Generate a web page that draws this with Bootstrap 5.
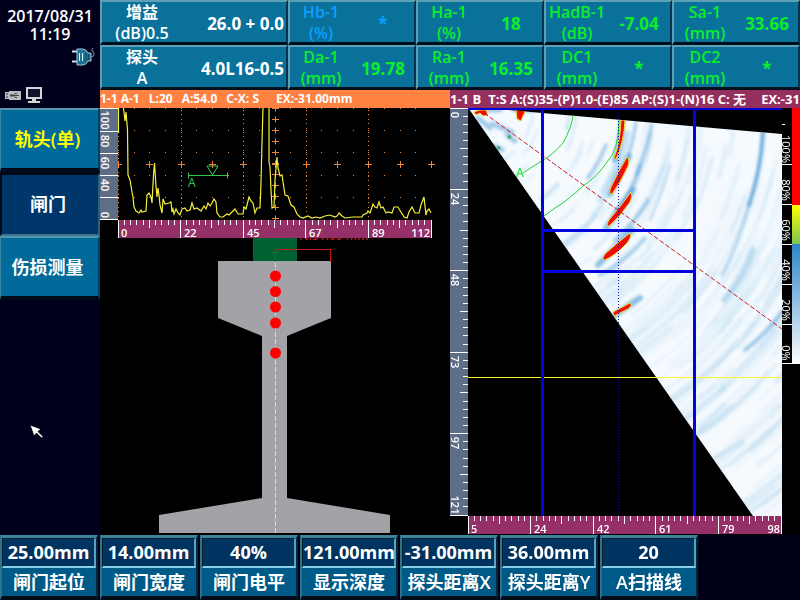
<!DOCTYPE html>
<html lang="zh-CN">
<head>
<meta charset="utf-8">
<meta name="viewport" content="width=device-width, initial-scale=1">
<title>Phased array rail inspection</title>
<link rel="stylesheet" href="https://cdn.jsdelivr.net/npm/bootstrap@5.3.0/dist/css/bootstrap.min.css">
<style>
  body { background: #000; color: #fff; font-family: "Open Sans", "Noto Sans CJK SC", sans-serif; font-weight: 600; font-size: 16px; line-height: 18px; }
  .side { width: 100px; flex: none; background: #00001c; }
  .status { height: 108px; }
  .date { padding-top: 7px; }
  .side-btn { height: 64px; width: 100%; border-radius: 0; font-size: 18px; font-weight: 600; color: #fff; background: #006a9a; border: solid; border-width: 2px 2px 4px 1px; border-color: #5595ad #00405f #000a18 #3f86a2; padding: 0 4px 0 0; }
  .side-btn.current { color: #ff0; }
  .side-btn.pressed { background: #00376a; border-color: #000a18 #2b6078 #39748a #000a18; border-width: 3px 2px 2px 2px; }
  .params { display: grid; grid-template-columns: 188fr 128fr 128fr 128fr 128fr; grid-auto-rows: 45px; }
  .param { display: grid; grid-template-columns: 1fr 1fr; align-items: center; padding: 0; border-radius: 0; background: #0a719b; color: #0aef2a; font-weight: 600; font-size: 16px; line-height: 21px; border: solid; border-width: 2px 2px 3px 2px; border-color: #5f9fb5 #02344e #00101c #5f9fb5; white-space: nowrap; }
  .param > span { display: flex; flex-direction: column; align-items: center; }
  .param .value { font-size: 17px; font-weight: 700; }
  .param.first { color: #fff; grid-template-columns: 80px 1fr; }
  .param.first .value { align-items: flex-end; padding-right: 2px; }
  .param.alt { color: #0aa0ff; }
  .strip { height: 18px; line-height: 18px; font-weight: 700; overflow: hidden; white-space: nowrap; }
  .strip span { flex: none; }
  .strip .far { margin-left: 8px; }
  .strip-a { background: #ff8243; font-size: 12px; gap: 9px; }
  .strip-b { background: #942f5e; font-size: 13px; gap: 7px; }
  .scan { display: block; width: 100%; height: auto; font-size: 11px; font-weight: 600; }
  .settings { display: grid; grid-template-columns: repeat(8, 1fr); background: #000016; }
  .setting { height: 65px; margin-right: 2px; background: #005a87; border: solid; border-width: 3px 2px 4px 2px; border-color: #3d829b #00293f #000a18 #2f748d; text-align: center; white-space: nowrap; }
  .setting input { display: block; width: 100%; height: 30px; padding: 0 0 2px; border: solid; border-width: 1px 2px 2px 1px; border-color: #07202f #5aa3bf #86cfe8 #07202f; background: #00335f; color: #fff; text-align: center; font: inherit; font-size: 18px; font-weight: 700; line-height: 24px; border-radius: 0; }
  .setting label { display: block; font-size: 18px; line-height: 28px; }
  .pointer { position: absolute; left: 29px; top: 424px; }
</style>
<script src="https://cdn.jsdelivr.net/npm/bootstrap@5.3.0/dist/js/bootstrap.bundle.min.js"></script>
</head>
<body class="d-flex flex-column min-vh-100">
<div class="d-flex flex-grow-1">
  <aside class="side">
    <div class="status d-flex flex-column justify-content-between">
      <div class="date text-center">2017/08/31<br>11:19</div>
      <svg class="align-self-end me-1 mb-3" width="26" height="22" viewBox="70 46 26 22" aria-label="Mains power">
        <path d="M72 51.500h5M72 61.500h5" stroke="#cfe4ec" stroke-width="2"/>
        <path d="M77 49h6q3 0 5 4h3v8h-3q-2 4-5 4h-6z" fill="#1c7193" stroke="#a9c8d4"/>
        <path d="M79.500 53v8M82.500 53v8" stroke="#e8f8ff" stroke-width="1"/>
        <path d="M86 53v8M88.500 54v6" stroke="#0c4966"/>
        <path d="M91 57q3 0 3-3t-2-3q-1-1 1-3" fill="none" stroke="#7893a4"/>
      </svg>
      <svg class="ms-1 mb-1" width="40" height="18" viewBox="4 87 40 18" aria-label="USB and display">
        <path d="M5 93h4v-1h12v9H9v-1H5z" fill="#b9bbc1"/>
        <path d="M6 95h2M6 98h2" stroke="#333"/>
        <path d="M11 96.500h8M13 96.500l2-2h2M13 96.500l2 2h2" stroke="#444" fill="none"/>
        <circle cx="11.500" cy="96.500" r="1.200" fill="#333"/>
        <rect x="27" y="89" width="14" height="10" fill="#10142b" stroke="#d5d5d7" stroke-width="2"/>
        <path d="M32 100h4v2h4v2H28v-2h4z" fill="#d5d5d7"/>
      </svg>
    </div>
    <button class="btn side-btn current" type="button">轨头(单)</button>
    <button class="btn side-btn pressed" type="button">闸门</button>
    <button class="btn side-btn" type="button">伤损测量</button>
  </aside>

  <main class="flex-grow-1 overflow-hidden">
    <div class="params">
      <button type="button" class="btn param first"><span>增益<span>(dB)0.5</span></span><span class="value">26.0 + 0.0</span></button>
      <button type="button" class="btn param alt"><span>Hb-1<span>(%)</span></span><span class="value">*</span></button>
      <button type="button" class="btn param"><span>Ha-1<span>(%)</span></span><span class="value">18</span></button>
      <button type="button" class="btn param"><span>HadB-1<span>(dB)</span></span><span class="value">-7.04</span></button>
      <button type="button" class="btn param"><span>Sa-1<span>(mm)</span></span><span class="value">33.66</span></button>
      <button type="button" class="btn param first"><span>探头<span>A</span></span><span class="value">4.0L16-0.5</span></button>
      <button type="button" class="btn param"><span>Da-1<span>(mm)</span></span><span class="value">19.78</span></button>
      <button type="button" class="btn param"><span>Ra-1<span>(mm)</span></span><span class="value">16.35</span></button>
      <button type="button" class="btn param"><span>DC1<span>(mm)</span></span><span class="value">*</span></button>
      <button type="button" class="btn param"><span>DC2<span>(mm)</span></span><span class="value">*</span></button>
    </div>

    <div class="row g-0">
      <section class="col-6">
        <div class="strip strip-a d-flex"><span>1-1 A-1</span><span>L:20</span><span>A:54.0</span><span>C-X: S</span><span class="far">EX:-31.00mm</span></div>
        <svg class="scan" viewBox="100 108 350 427" aria-label="A scan and rail section">
          <!-- rail section -->
          <text x="299" y="240" font-size="12" fill="#c01818">N:31.00 mm</text>
          <rect x="253" y="238" width="44" height="23" fill="#006233"/>
          <path d="M218 261H331V318L287 336V498L390 515V533H159V515L262 498V336L218 318Z" fill="#a3a2a7"/>
          <g shape-rendering="crispEdges" fill="none">
            <path d="M275.500 262V249.500H330.500V262" stroke="#c41a1a"/>
            <path d="M275.500 262V533" stroke="#fff200" stroke-dasharray="5 2"/>
          </g>
          <g fill="#f00"><circle cx="275.500" cy="276" r="5.500"/><circle cx="275.500" cy="291.500" r="5.500"/><circle cx="275.500" cy="307" r="5.500"/><circle cx="275.500" cy="323" r="5.500"/><circle cx="275.500" cy="353" r="5.500"/></g>
          <!-- A scan -->
          <g id="gridA" stroke="#f08430" fill="none"></g>
          <path d="M188.500 172.500v6M188 175.500h40M227.500 172.500v6M207 166l5.500 9 5.500-9z" stroke="#35c94b" fill="none"/>
          <text x="188" y="187" fill="#35c94b" font-size="12" font-weight="400">A</text>
          <g fill="none" stroke="#f5f03c" stroke-width="1.200">
            <polyline points="118.500,133 118.500,108"/>
            <polyline points="123.500,108 125,121 126,112 127.500,130 128,175 130,180 132,192 133,197 134,207 136,211 139,213 141,210 142,212 146,211 147,195 149,193 151,197 152,203 153.500,175 154.500,163 156,186 157,197 158,188 159,195 160,205 162,213 163,199 165,204 169,203 171,202 172,212 173,209 174,214 176,209 178,213 180,215 182,209 185,208 187,211 190,210 192,203 194,209 197,208 201,211 204,206 206,209 208,203 210,206 212,203 214,199 216,202 217,213 220,217 223,217 227,214 229,215 235,209 238,214 243,214 244,207 246,209 249,197 251,201 253,203 255,213 257,208 260,208 261,183 262,142 263,108"/>
            <polyline points="269,108 269,162 270,167 271,190 272,208 274,207 275,180 277,157 278,168 280,176 282,175 285,195 288,196 291,205 294,207 297,214 300,217 303,218 308,216 312,218 316,217 320,218 325,216 330,215 335,217 337,216 339,213 342,216 345,218 353,217 362,217 363,215 367,213 368,211 370,213 373,204 375,207 377,208 379,202 381,208 383,207 386,213 388,212 392,213 394,207 398,207 402,214 403,215 404,217 407,218 409,212 412,207 415,213 419,213 421,205 424,197 426,215 427,211 429,209 431,213"/>
          </g>
          <rect x="100" y="108" width="18" height="112" fill="#5f6e87"/>
          <path d="M100 108.500h18M100 131.500h18M100 153.500h18M100 175.500h18M100 197.500h18M100 219.500h18" stroke="#fff"/>
          <g fill="#fff" text-anchor="middle">
            <text transform="translate(101 120) rotate(90)">100</text><text transform="translate(101 141) rotate(90)">80</text><text transform="translate(101 163) rotate(90)">60</text><text transform="translate(101 185) rotate(90)">40</text><text transform="translate(101 215) rotate(90)">0</text>
          </g>
          <rect x="118" y="220" width="314" height="18" fill="#942f67"/>
          <g id="ticksA" stroke="#fff"></g>
          <g fill="#fff"><text x="121" y="237">0</text><text x="184" y="237">22</text><text x="247" y="237">45</text><text x="309" y="237">67</text><text x="372" y="237">89</text><text x="430" y="237" text-anchor="end">112</text></g>
        </svg>
      </section>

      <section class="col-6">
        <div class="strip strip-b d-flex"><span>1-1 B</span><span>T:S A:(S)35-(P)1.0-(E)85 AP:(S)1-(N)16 C: 无</span><span class="far">EX:-31.00mm</span></div>
        <svg class="scan" viewBox="450 108 350 427" aria-label="Sector scan">
          <defs>
            <clipPath id="sector"><path d="M469 109H498L782 134V516H753Z"/></clipPath>
            <filter id="soft" filterUnits="userSpaceOnUse" x="450" y="100" width="350" height="430"><feGaussianBlur stdDeviation="1.800"/></filter>
            <linearGradient id="mid" x2="0" y2="1"><stop stop-color="#ff0"/><stop offset="1" stop-color="#7cc54e"/></linearGradient>
            <linearGradient id="low" x2="0" y2="1"><stop stop-color="#2b85c8"/><stop offset="1" stop-color="#fff"/></linearGradient>
          </defs>
          <g clip-path="url(#sector)">
            <path d="M468 108H782V516H468Z" fill="#f5fafe"/>
            <g id="streaks" fill="none" filter="url(#soft)"></g>
            <g fill="none" filter="url(#soft)" stroke="#4a9bd3" stroke-linecap="round">
              <path d="M763 132Q761 170 749 205" stroke-width="4" opacity=".8"/>
              <path d="M749 205Q738 245 722 275" stroke-width="4" opacity=".35"/>
              <path d="M753 250Q745 275 724 300" stroke-width="6" opacity=".3"/>
              <path d="M782 312Q765 335 745 350" stroke-width="4" opacity=".5"/>
              <path d="M636 122Q632 150 622 172M652 125Q646 150 636 175" stroke-width="3" opacity=".5"/>
              <path d="M670 165Q662 195 650 220" stroke-width="2" opacity=".4"/>
              <path d="M640 165Q634 190 615 212M648 200Q635 222 615 240M645 238Q625 262 600 275M606 145Q598 165 588 178" stroke-width="4" opacity=".45"/>
              <path d="M622 122Q620 145 615 160M629 156L610 194M633 190L606 228M632 230L598 265M640 298L612 317" stroke-width="6" opacity=".6"/>
              <path d="M478 110H500M515 110H532M478 118L490 128M507 135L515 141M495 146L502 150M492 124L512 132" stroke-width="5" opacity=".5"/>
              <path d="M725 404L700 428M742 442L715 458" stroke-width="4" opacity=".15"/>
            </g>
            <g fill="#f10b05" stroke="#e7dc3a" stroke-width="1">
              <path d="M621 120H625Q624 142 616 159Q613 160 615 155Q620 143 621 120Z"/>
              <path d="M627 157Q630 160 628 166Q621 182 612 194Q608 195 611 187Q619 170 627 157Z"/>
              <path d="M631 192Q633 196 630 202Q620 217 609 226Q605 227 609 220Q621 206 631 192Z"/>
              <path d="M630 233Q632 237 627 243Q616 255 605 260Q601 260 605 254Q618 242 630 233Z"/>
              <path d="M630 303Q633 305 628 309L614 316L613 312Z"/>
              <path d="M474 112L480 110H486L488 115L483 116L480 113L476 115Z"/>
              <path d="M516 110H526L523 116L521 121L517 119Z"/>
            </g>
            <g fill="#55ae7e"><circle cx="509.500" cy="137" r="2"/><circle cx="498.500" cy="148" r="2"/></g>
          </g>
          <path d="M573 115Q572 127 563 143Q553 155 540 162L523 173M619 120Q619 150 607 162Q597 177 583 186Q567 201 555 208L544 216" fill="none" stroke="#22d32f"/>
          <text x="516" y="177" fill="#32ee3c" font-size="12">A</text>
          <path d="M484 113L782 329" stroke="#cb1b1f" stroke-dasharray="5 2"/>
          <path d="M468 377.500H782" stroke="#fbf52a" shape-rendering="crispEdges"/>
          <path d="M618.500 109V516" stroke="#1010a0" stroke-dasharray="1 2"/>
          <path d="M468 109H782" stroke="#0303dc" stroke-width="2"/>
          <path d="M542.500 108V516M694.500 108V516M542 230.500H695M542 271.500H695" stroke="#0303dc" stroke-width="3"/>
          <rect x="450" y="108" width="18" height="408" fill="#5f6e87"/>
          <rect x="468" y="516" width="314" height="18" fill="#942f67"/>
          <g id="ticksB" stroke="#fff"></g>
          <g fill="#fff" text-anchor="middle">
            <text transform="translate(451 115) rotate(90)">0</text><text transform="translate(451 199) rotate(90)">24</text><text transform="translate(451 280) rotate(90)">48</text><text transform="translate(451 362) rotate(90)">73</text><text transform="translate(451 443) rotate(90)">97</text><text transform="translate(451 505) rotate(90)">121</text>
          </g>
          <g fill="#fff"><text x="471" y="533">5</text><text x="534" y="533">24</text><text x="597" y="533">42</text><text x="659" y="533">61</text><text x="722" y="533">79</text><text x="780" y="533" text-anchor="end">98</text></g>
          <!-- amplitude palette -->
          <rect x="792" y="108" width="8" height="97" fill="#f00"/>
          <rect x="792" y="205" width="8" height="39" fill="url(#mid)"/>
          <rect x="792" y="244" width="8" height="120" fill="url(#low)"/>
          <path d="M782 124.500h3M782 164.500h10M782 204.500h10M782 244.500h10M782 284.500h10M782 324.500h10M782 363.500h18" stroke="#fff"/>
          <g fill="#fff" text-anchor="middle" font-weight="400">
            <text transform="translate(782 149) rotate(90)">100%</text><text transform="translate(782 190) rotate(90)">80%</text><text transform="translate(782 230) rotate(90)">60%</text><text transform="translate(782 270) rotate(90)">40%</text><text transform="translate(782 310) rotate(90)">20%</text><text transform="translate(782 353) rotate(90)">0%</text>
          </g>
        </svg>
      </section>
    </div>
  </main>
</div>

<footer class="settings">
  <div class="setting"><input id="s1" value="25.00mm"><label for="s1">闸门起位</label></div>
  <div class="setting"><input id="s2" value="14.00mm"><label for="s2">闸门宽度</label></div>
  <div class="setting"><input id="s3" value="40%"><label for="s3">闸门电平</label></div>
  <div class="setting"><input id="s4" value="121.00mm"><label for="s4">显示深度</label></div>
  <div class="setting"><input id="s5" value="-31.00mm"><label for="s5">探头距离X</label></div>
  <div class="setting"><input id="s6" value="36.00mm"><label for="s6">探头距离Y</label></div>
  <div class="setting"><input id="s7" value="20"><label for="s7">A扫描线</label></div>
</footer>

<svg class="pointer" width="16" height="16" viewBox="0 0 16 16" aria-hidden="true"><path d="M1 1L12 5L9 7.500L14 12.500L12.500 14L7.500 9L5 12Z" fill="#fff" stroke="#000" stroke-width=".8"/></svg>

<script>
  function addPath(id, d, attrs) {
    const p = document.createElementNS('http://www.w3.org/2000/svg', 'path');
    p.setAttribute('d', d);
    for (const k in attrs || {}) p.setAttribute(k, attrs[k]);
    document.getElementById(id).appendChild(p);
  }
  // Ruler ticks: ten per major division, the fifth one longer
  function ticks(start, end, edge, vertical) {
    let d = '';
    for (let i = 0; i <= 50; i++) {
      const v = Math.floor(start + (end - start) * i / 50) + 0.5;
      const len = i % 10 === 0 ? 18 : i % 5 === 0 ? 8 : 5;
      d += vertical ? `M${edge} ${v}h${-len}` : `M${v} ${edge}v${len}`;
    }
    return d;
  }
  addPath('ticksA', ticks(118, 431, 220, false));
  addPath('ticksB', ticks(468, 781, 516, false) + ticks(108, 515, 468, true));

  // Orange graticule of the A scan
  let dots = '', crosses = '';
  for (let i = 0; i <= 10; i++) {
    const x = Math.round(118 + 31.3 * i) + 0.5;
    crosses += `M${x - 3.5} 164.5h7M${x} 161v7`;
    if (i % 2 === 0 && i < 10) for (let y = 110; y < 219; y += 4.4) dots += `M${x - 0.5} ${Math.round(y) + 0.5}h1`;
  }
  for (const y of [108.5, 130.5, 152.5, 175.5, 197.5])
    for (let i = 0; i < 20; i++) dots += `M${Math.round(118 + 15.65 * i)} ${y}h1`;
  for (let y = 108.5; y < 219; y += 11) crosses += `M272 ${y}h7M275.5 ${y - 3}v6`;
  addPath('gridA', dots);
  addPath('gridA', crosses);

  // Faint echoes along circles round the probe
  let seed = 11;
  const rnd = () => (seed = (seed * 16807) % 2147483647) / 2147483647;
  for (let i = 0; i < 380; i++) {
    const r = 15 + 490 * Math.sqrt(rnd()), a = rnd() * 0.9, b = a + 0.12 + rnd() * 0.3;
    const px = t => (470 + r * Math.cos(t)).toFixed(1), py = t => (106 + r * Math.sin(t)).toFixed(1);
    const near = r < 190 ? 0.3 : 0.14;
    addPath('streaks', `M${px(b)} ${py(b)}A${r} ${r} 0 0 0 ${px(a)} ${py(a)}`,
      { stroke: rnd() < 0.35 ? '#fff' : '#8dc3e6', 'stroke-width': (2 + rnd() * 4).toFixed(1), opacity: (0.06 + rnd() * near).toFixed(2) });
  }
</script>
</body>
</html>
